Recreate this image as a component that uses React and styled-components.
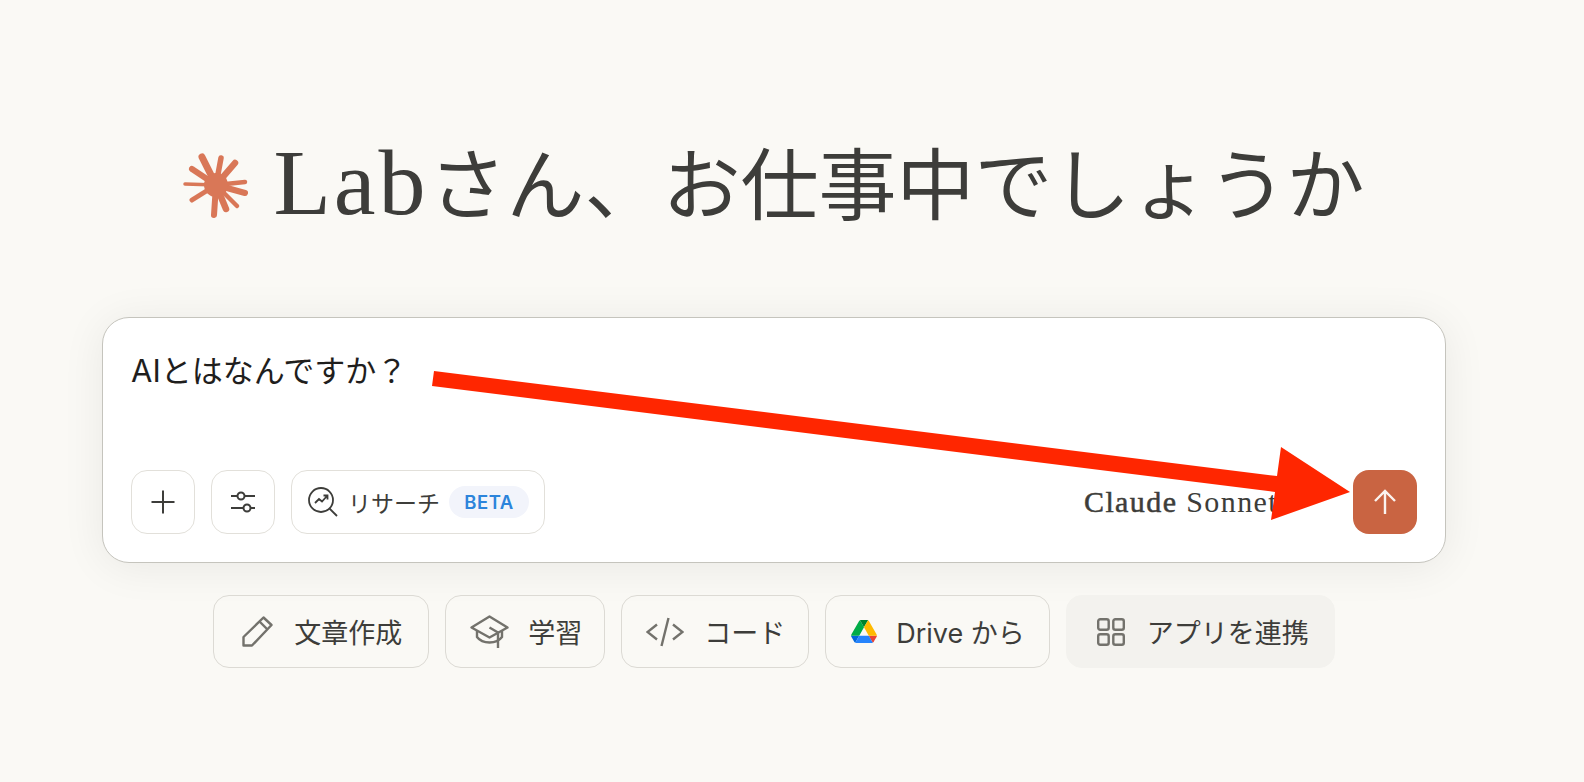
import React from "react";
import styled, { createGlobalStyle } from "styled-components";

const GlobalStyle = createGlobalStyle`
  html, body {
    margin: 0;
    padding: 0;
    height: 100%;
    background: #faf9f5;
    overflow: hidden;
  }
  * { box-sizing: border-box; }
`;

const SANS = `Inter, "Noto Sans CJK JP", sans-serif`;
const SERIF = `"Liberation Serif", "Noto Sans CJK JP", serif`;

const Page = styled.div`
  position: relative;
  width: 1584px;
  height: 782px;
  padding: 130px 0 0 102px;
  background: #faf9f5;
  font-family: ${SANS};
`;

const Column = styled.main`
  width: 1344px;
  display: flex;
  flex-direction: column;
  align-items: center;
`;

const Greeting = styled.div`
  height: 110px;
  display: flex;
  align-items: center;
  gap: 24px;
  margin-bottom: 77px;
`;

const Title = styled.h1`
  margin: 0;
  font-family: ${SERIF};
  font-size: 78px;
  font-weight: 400;
  line-height: 110px;
  color: #3d3d3a;
  white-space: nowrap;
`;

const Latin = styled.span`
  font-size: 94px;
  letter-spacing: 3px;
`;

const Card = styled.section`
  width: 1344px;
  height: 246px;
  padding: 31px 28px 28px;
  display: flex;
  flex-direction: column;
  justify-content: space-between;
  background: #fff;
  border: 1px solid #c5c4bd;
  border-radius: 27px;
  box-shadow: 0 4px 44px rgba(0, 0, 0, 0.07);
`;

const Prompt = styled.div`
  font-size: 31px;
  line-height: 44px;
  font-weight: 400;
  color: #1f1e1d;
`;

const Toolbar = styled.div`
  display: flex;
  align-items: center;
  gap: 16px;
`;

const ToolButton = styled.button`
  height: 64px;
  min-width: 64px;
  padding: 0;
  display: flex;
  align-items: center;
  justify-content: center;
  background: #fff;
  border: 1px solid #e2e0da;
  border-radius: 16px;
  color: #3d3d3a;
`;

const ResearchButton = styled(ToolButton)`
  padding: 0 15px 0 16px;
  font-family: ${SANS};
  font-size: 23px;
  gap: 10px;
`;

const Beta = styled.span`
  margin-left: -1px;
  width: 80px;
  height: 32px;
  display: flex;
  align-items: center;
  justify-content: center;
  border-radius: 16px;
  background: #f2f4fb;
  color: #2c84db;
  font-size: 18.500px;
  font-weight: 600;
  letter-spacing: 0.5px;
`;

const ModelName = styled.div`
  margin-left: auto;
  margin-right: 59px;
  font-family: ${SERIF};
  font-size: 30px;
  letter-spacing: 1.400px;
  color: #3d3d3a;
  white-space: nowrap;
`;

const ModelBrand = styled.span`
  -webkit-text-stroke: 0.500px #3d3d3a;
`;

const SendButton = styled.button`
  width: 64px;
  height: 64px;
  padding: 0;
  display: flex;
  align-items: center;
  justify-content: center;
  background: #c96442;
  border: none;
  border-radius: 16px;
`;

const Chips = styled.nav`
  margin-top: 32px;
  display: flex;
  gap: 16px;
`;

const Chip = styled.button`
  height: 73px;
  padding: 0 ${(p) => p.$right}px 0 ${(p) => p.$left}px;
  display: flex;
  align-items: center;
  gap: ${(p) => p.$gap}px;
  font-family: ${SANS};
  font-size: 27px;
  color: #3d3d3a;
  background: ${(p) => (p.$muted ? "#f3f2ee" : "transparent")};
  border: 1px solid ${(p) => (p.$muted ? "#f3f2ee" : "#dcdad4")};
  border-radius: 16px;
  white-space: nowrap;
`;

const Annotation = styled.svg`
  position: absolute;
  top: 0;
  left: 0;
  pointer-events: none;
`;

function Spark() {
  const rays = [
    [31, 17, 7], [50, 18, 5.5], [64, 23, 6.5], [74, 42, 4.5], [74, 53, 6], [66, 66, 4.5],
    [55, 69, 6.5], [43, 75, 6], [21, 60, 5], [14, 44, 3.5], [21, 29, 6],
  ];
  return (
    <svg width="66" height="66" viewBox="12 12 66 66" fill="none">
      {rays.map(([x, y, w]) => (
        <line key={`${x}-${y}`} x1="45" y1="45" x2={x} y2={y} stroke="#d97757" strokeWidth={w} strokeLinecap="round" />
      ))}
      <circle cx="45" cy="45" r="12" fill="#d97757" />
    </svg>
  );
}

function PlusIcon() {
  return (
    <svg width="26" height="26" viewBox="0 0 26 26" stroke="#3d3d3a" strokeWidth="2" fill="none">
      <path d="M13 1.500v23M1.500 13h23" />
    </svg>
  );
}

function SlidersIcon() {
  return (
    <svg width="26" height="24" viewBox="0 0 26 24" stroke="#3d3d3a" strokeWidth="2" fill="none">
      <path d="M1 6h6M15 6h10M1 18h12M21 18h4" />
      <circle cx="11" cy="6" r="3.500" />
      <circle cx="17" cy="18" r="3.500" />
    </svg>
  );
}

function ResearchIcon() {
  return (
    <svg width="30" height="30" viewBox="0 0 30 30" stroke="#3d3d3a" strokeWidth="1.800" fill="none">
      <circle cx="13" cy="13" r="12" />
      <path d="M21.500 21.500l7.500 7.500" />
      <path d="M7 16l4-4 3 2.500 5-5.500M15.500 8.500H19.500V12.500" />
    </svg>
  );
}

function ArrowUpIcon() {
  return (
    <svg width="24" height="26" viewBox="0 0 24 26" stroke="#fbf3ef" strokeWidth="2.400" fill="none">
      <path d="M12 25V2M2 12L12 2l10 10" />
    </svg>
  );
}

function PencilIcon() {
  return (
    <svg width="31" height="31" viewBox="0 0 31 31" stroke="#73726c" strokeWidth="2.400" fill="none" strokeLinejoin="round">
      <path d="M1.500 29.500V21L21.500 1.500 29.500 9 10 29.500H1.500z" />
      <path d="M17.500 5.500L25.500 13.500" />
    </svg>
  );
}

function CapIcon() {
  return (
    <svg width="39" height="33" viewBox="0 0 39 33" stroke="#73726c" strokeWidth="2.400" fill="none" strokeLinejoin="round">
      <path d="M1.500 12.500L19.500 1.500 37.500 12.500 19.500 22.500 1.500 12.500z" />
      <path d="M7 16v6c3 4 8 5.500 12.500 5.500S29 26 32 22v-6" />
      <path d="M19.500 12.500L28 17.500V33" />
    </svg>
  );
}

function CodeIcon() {
  return (
    <svg width="38" height="30" viewBox="0 0 38 30" stroke="#73726c" strokeWidth="2.400" fill="none">
      <path d="M11 7.500L1.500 15 11 22.500M27 7.500L36.500 15 27 22.500M22.500 1L15.500 29" />
    </svg>
  );
}

function DriveIcon() {
  return (
    <svg width="26" height="23" viewBox="0 0 87.300 78">
      <path d="m6.600 66.850 3.850 6.650c.8 1.400 1.950 2.500 3.300 3.300l13.750-23.800h-27.500c0 1.550.4 3.100 1.200 4.500z" fill="#0066da" />
      <path d="m43.650 25-13.750-23.800c-1.350.8-2.500 1.900-3.300 3.300l-25.400 44a9.060 9.060 0 0 0 -1.200 4.500h27.500z" fill="#00ac47" />
      <path d="m73.550 76.800c1.350-.8 2.500-1.900 3.300-3.300l1.600-2.750 7.650-13.250c.8-1.400 1.200-2.950 1.200-4.500h-27.502l5.852 11.500z" fill="#ea4335" />
      <path d="m43.650 25 13.750-23.800c-1.350-.8-2.900-1.200-4.500-1.200h-18.500c-1.600 0-3.150.45-4.500 1.200z" fill="#00832d" />
      <path d="m59.800 53h-32.300l-13.750 23.800c1.350.8 2.900 1.200 4.500 1.200h50.800c1.600 0 3.150-.45 4.500-1.200z" fill="#2684fc" />
      <path d="m73.400 26.500-12.700-22c-.8-1.400-1.950-2.500-3.300-3.300l-13.750 23.800 16.150 28h27.450c0-1.550-.4-3.100-1.200-4.500z" fill="#ffba00" />
    </svg>
  );
}

function GridIcon() {
  return (
    <svg width="28" height="28" viewBox="0 0 28 28" stroke="#73726c" strokeWidth="2.400" fill="none">
      <rect x="1.200" y="1.200" width="10.500" height="10.500" rx="2" />
      <rect x="16.300" y="1.200" width="10.500" height="10.500" rx="2" />
      <rect x="1.200" y="16.300" width="10.500" height="10.500" rx="2" />
      <rect x="16.300" y="16.300" width="10.500" height="10.500" rx="2" />
    </svg>
  );
}

export default function App() {
  return (
    <Page>
      <GlobalStyle />
      <Column>
        <Greeting>
          <Spark />
          <Title>
            <Latin>Lab</Latin>さん、お仕事中でしょうか
          </Title>
        </Greeting>

        <Card>
          <Prompt>AIとはなんですか？</Prompt>
          <Toolbar>
            <ToolButton><PlusIcon /></ToolButton>
            <ToolButton><SlidersIcon /></ToolButton>
            <ResearchButton>
              <ResearchIcon />
              リサーチ
              <Beta>BETA</Beta>
            </ResearchButton>
            <ModelName>
              <ModelBrand>Claude</ModelBrand> Sonnet
            </ModelName>
            <SendButton><ArrowUpIcon /></SendButton>
          </Toolbar>
        </Card>

        <Chips>
          <Chip $left={28} $gap={21} $right={26}><PencilIcon />文章作成</Chip>
          <Chip $left={24} $gap={19} $right={22}><CapIcon />学習</Chip>
          <Chip $left={24} $gap={20} $right={23}><CodeIcon />コード</Chip>
          <Chip $left={25} $gap={19} $right={24}><DriveIcon />Drive から</Chip>
          <Chip $left={30} $gap={22} $right={25} $muted><GridIcon />アプリを連携</Chip>
        </Chips>
      </Column>

      <Annotation width="1584" height="782" viewBox="0 0 1584 782">
        <polygon points="434,371 1277,476 1281,447 1350,492 1271,520 1275,492 432,386" fill="#ff2600" />
      </Annotation>
    </Page>
  );
}
